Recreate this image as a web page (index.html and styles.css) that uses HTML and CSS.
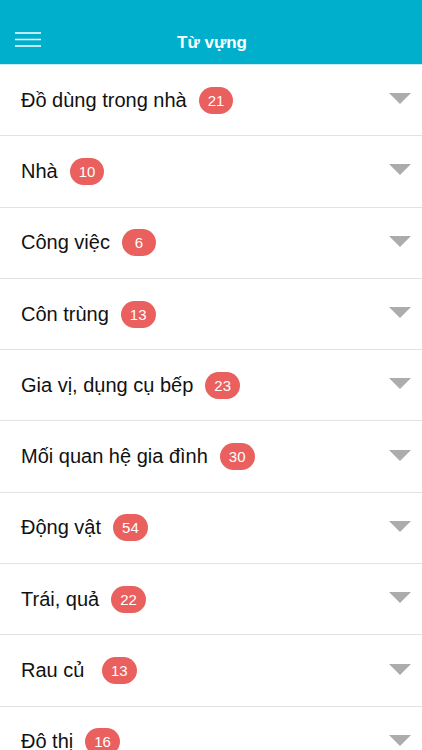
FILE: index.html
```html
<!DOCTYPE html>
<html lang="vi">
<head>
    <meta charset="UTF-8">
    <meta name="viewport" content="width=device-width, initial-scale=1.0">
    <title>Từ vựng</title>
    <link rel="stylesheet" href="styles.css">
</head>
<body>
    <header class="top-bar">
        <button class="menu-button" aria-label="Menu">
            <svg width="26" height="16" viewBox="0 0 26 16">
                <path d="M0 1h26M0 7.5h26M0 14h26" stroke="#fff" stroke-width="1.6" fill="none"/>
            </svg>
        </button>
        <h1 class="title">Từ vựng</h1>
    </header>

    <main>
        <ul class="topic-list">
            <li class="topic"><span class="topic-name">Đồ dùng trong nhà</span><span class="badge">21</span><span class="arrow"></span></li>
            <li class="topic"><span class="topic-name">Nhà</span><span class="badge">10</span><span class="arrow"></span></li>
            <li class="topic"><span class="topic-name">Công việc</span><span class="badge">6</span><span class="arrow"></span></li>
            <li class="topic"><span class="topic-name">Côn trùng</span><span class="badge">13</span><span class="arrow"></span></li>
            <li class="topic"><span class="topic-name">Gia vị, dụng cụ bếp</span><span class="badge">23</span><span class="arrow"></span></li>
            <li class="topic"><span class="topic-name">Mối quan hệ gia đình</span><span class="badge">30</span><span class="arrow"></span></li>
            <li class="topic"><span class="topic-name">Động vật</span><span class="badge">54</span><span class="arrow"></span></li>
            <li class="topic"><span class="topic-name">Trái, quả</span><span class="badge">22</span><span class="arrow"></span></li>
            <li class="topic"><span class="topic-name">Rau củ&nbsp;</span><span class="badge">13</span><span class="arrow"></span></li>
            <li class="topic"><span class="topic-name">Đô thị</span><span class="badge">16</span><span class="arrow"></span></li>
        </ul>
    </main>
</body>
</html>
```

FILE: styles.css
```css
body {
    margin: 0;
    font-family: "Liberation Sans", Arial, sans-serif;
    background-color: #fff;
    color: #111;
    overflow: hidden;
}

.top-bar {
    background-color: #00afcc;
    height: 65px;
    box-sizing: border-box;
    padding-top: 20px;
    display: flex;
    align-items: center;
    justify-content: center;
    position: relative;
    border-bottom: 1px solid #c8ecf2;
}

.menu-button {
    position: absolute;
    left: 15px;
    top: 32px;
    background: none;
    border: none;
    padding: 0;
    line-height: 0;
}

.title {
    margin: 0;
    color: #fff;
    font-size: 17px;
    font-weight: bold;
    margin-left: 2px;
    margin-top: 1px;
}

.topic-list {
    list-style: none;
    margin: 0;
    padding: 0;
}

.topic {
    height: 71.3px;
    box-sizing: border-box;
    border-bottom: 1px solid #e2e2e2;
    display: flex;
    align-items: center;
    padding: 0 11px 0 21px;
}

.topic-name {
    font-size: 20px;
    white-space: pre;
}

.badge {
    background-color: #e9605e;
    color: #fff;
    font-size: 15px;
    min-width: 34px;
    height: 27px;
    line-height: 27px;
    border-radius: 14px;
    box-sizing: border-box;
    padding: 0 9px;
    text-align: center;
    margin-left: 12px;
}

.arrow {
    margin-left: auto;
    width: 0;
    height: 0;
    border-left: 11px solid transparent;
    border-right: 11px solid transparent;
    border-top: 11px solid #acacac;
    margin-top: -3px;
}
```
